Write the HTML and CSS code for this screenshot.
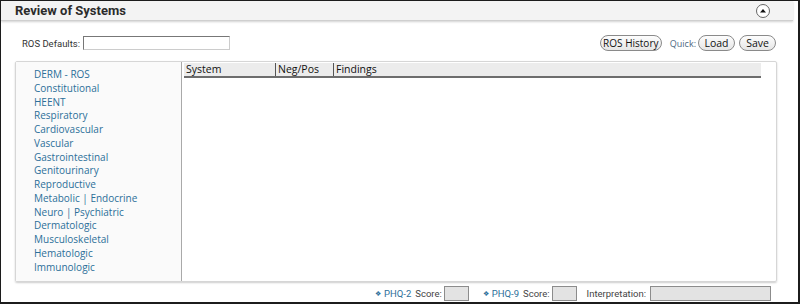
FILE: index.html
```html
<!DOCTYPE html>
<html lang="en">
<head>
  <meta charset="UTF-8">
  <title>Review of Systems</title>
  <link rel="stylesheet" href="styles.css">
</head>
<body>
<div class="frame">
  <div class="head">
    <span class="title">Review of Systems</span>
    <span class="collapse"><svg width="14" height="14" viewBox="0 0 14 14"><circle cx="7" cy="7" r="6.5" fill="#fff" stroke="#666"/><path d="M4 8.5 L7 5 L10 8.5 Z" fill="#111"/></svg></span>
  </div>

  <div class="toolbar">
    <label class="defaults">ROS Defaults: <input type="text" class="txt"></label>
    <div class="actions">
      <button class="pill hist">ROS History</button>
      <span class="quick">Quick:</span>
      <button class="pill short">Load</button>
      <button class="pill short">Save</button>
    </div>
  </div>

  <div class="panel">
    <ul class="systems">
      <li>DERM - ROS</li>
      <li>Constitutional</li>
      <li>HEENT</li>
      <li>Respiratory</li>
      <li>Cardiovascular</li>
      <li>Vascular</li>
      <li>Gastrointestinal</li>
      <li>Genitourinary</li>
      <li>Reproductive</li>
      <li>Metabolic | Endocrine</li>
      <li>Neuro | Psychiatric</li>
      <li>Dermatologic</li>
      <li>Musculoskeletal</li>
      <li>Hematologic</li>
      <li>Immunologic</li>
    </ul>
    <div class="grid">
      <div class="grid-head">
        <span class="col c-sys">System</span>
        <span class="col c-neg">Neg/Pos</span>
        <span class="col c-find">Findings</span>
      </div>
    </div>
  </div>

  <div class="scores">
    <span class="link"><i class="dia">&#10070;</i>PHQ-2</span>
    <span class="lbl">Score:</span>
    <span class="box small"></span>
    <span class="link gap"><i class="dia">&#10070;</i>PHQ-9</span>
    <span class="lbl">Score:</span>
    <span class="box small"></span>
    <span class="lbl gap2">Interpretation:</span>
    <span class="box wide"></span>
  </div>
</div>
</body>
</html>
```

FILE: styles.css
```css
body {
  margin: 0;
  background: #fff;
}
.frame {
  width: 800px;
  height: 304px;
  box-sizing: border-box;
  border: 1px solid #1c1c1c;
  border-right-width: 2px;
  border-bottom-width: 2px;
  display: flex;
  flex-direction: column;
  font-family: Roboto, "Liberation Sans", sans-serif;
  color: #333;
}
.head {
  height: 20px;
  box-sizing: border-box;
  margin-right: 5px;
  background: #f3f3f3;
  border-bottom: 1px solid #cfcfcf;
  box-shadow: 0 1px 2px rgba(0, 0, 0, 0.18);
  display: flex;
  align-items: center;
  justify-content: space-between;
  padding: 0 23px 0 14px;
}
.title {
  font-size: 13px;
  font-weight: bold;
  color: #2b2b2b;
}
.collapse svg {
  display: block;
  margin-top: 1px;
}
.toolbar {
  margin-top: 14px;
  height: 16px;
  display: flex;
  align-items: center;
  justify-content: space-between;
  padding: 0 22px 0 21px;
}
.defaults {
  font-size: 9.5px;
  color: #333;
  display: flex;
  align-items: center;
}
.txt {
  margin: 0 0 0 3px;
  width: 147px;
  height: 14px;
  box-sizing: border-box;
  border: 1px solid #ccc;
  border-top-color: #777;
  border-left-color: #777;
  padding: 0;
}
.actions {
  display: flex;
  align-items: center;
}
.pill {
  font-family: "Open Sans", sans-serif;
  font-size: 10.5px;
  height: 16px;
  line-height: 13px;
  margin: 0;
  border: 1px solid #8a8a8a;
  border-radius: 8px;
  background: linear-gradient(#fdfdfd, #e6e6e6);
  color: #111;
}
.hist {
  width: 62px;
  padding: 0;
  font-size: 10px;
}
.short {
  width: 37px;
  padding: 0;
}
.quick {
  font-family: "Open Sans", sans-serif;
  font-size: 9px;
  color: #4e6a82;
  margin: 0 2px 0 8px;
}
.pill + .pill {
  margin-left: 4px;
}
.panel {
  margin: 10px 0 0 14px;
  width: 762px;
  height: 221px;
  box-sizing: border-box;
  border: 1px solid #d6d6d6;
  border-radius: 2px;
  box-shadow: 0 1px 2px rgba(0, 0, 0, 0.2);
  display: flex;
}
.systems {
  list-style: none;
  margin: 0;
  width: 166px;
  box-sizing: border-box;
  padding: 6px 0 0 18px;
  background: #fafafa;
  border-right: 1px solid #a9a9a9;
  font-family: "Open Sans", sans-serif;
  font-size: 10px;
  line-height: 13.75px;
  color: #2c6f99;
}
.grid {
  flex: 1;
  padding: 1px 15px 0 2px;
}
.grid-head {
  display: flex;
  height: 13px;
  background: #ececec;
  border-bottom: 2px solid #6d6d6d;
  font-family: "Open Sans", sans-serif;
  font-size: 10.5px;
  line-height: 12px;
  color: #111;
}
.col {
  padding-left: 2px;
}
.c-sys {
  width: 89px;
}
.c-neg {
  width: 55px;
  border-left: 1px solid #555;
}
.c-find {
  flex: 1;
  border-left: 1px solid #555;
}
.scores {
  margin-top: 4px;
  height: 15px;
  display: flex;
  align-items: center;
  padding-left: 374px;
  font-size: 9.5px;
  color: #444;
}
.link {
  color: #2c6f99;
}
.dia {
  font-style: normal;
  font-size: 7px;
  margin-right: 3px;
  vertical-align: 1px;
}
.lbl {
  margin-left: 4px;
}
.gap {
  margin-left: 14px;
}
.gap2 {
  margin-left: 10px;
}
.box {
  height: 15px;
  box-sizing: border-box;
  background: #e3e3e3;
  border: 1px solid #8c8c8c;
  margin-left: 2px;
}
.small {
  width: 25px;
}
.wide {
  width: 121px;
  margin-left: 4px;
}
```
